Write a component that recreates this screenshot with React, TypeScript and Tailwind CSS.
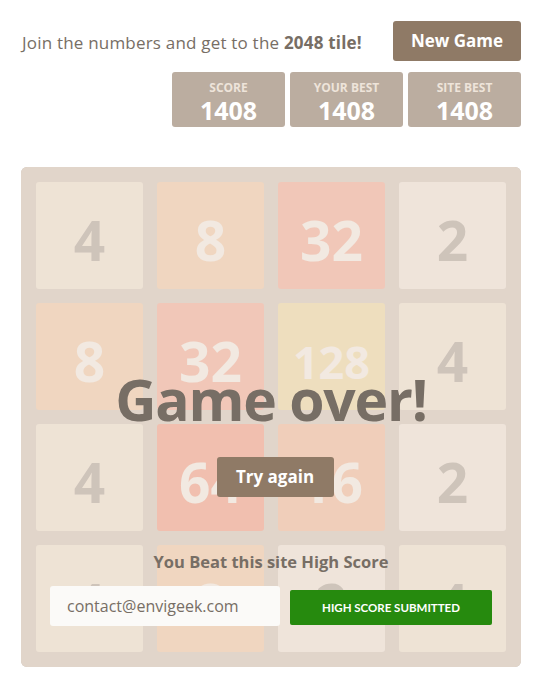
import React from "react";

const grid: number[][] = [
  [4, 8, 32, 2],
  [8, 32, 128, 4],
  [4, 64, 16, 2],
  [4, 8, 2, 4],
];

function tileClass(v: number): string {
  switch (v) {
    case 2:
      return "bg-[#eee4da] text-[#776e65] text-[55px]";
    case 4:
      return "bg-[#ede0c8] text-[#776e65] text-[55px]";
    case 8:
      return "bg-[#f2b179] text-[#f9f6f2] text-[55px]";
    case 16:
      return "bg-[#f59563] text-[#f9f6f2] text-[55px]";
    case 32:
      return "bg-[#f67c5f] text-[#f9f6f2] text-[55px]";
    case 64:
      return "bg-[#f65e3b] text-[#f9f6f2] text-[55px]";
    case 128:
      return "bg-[#edcf72] text-[#f9f6f2] text-[45px]";
    default:
      return "bg-[#eee4da] text-[#776e65] text-[55px]";
  }
}

function ScoreBox({ label, value }: { label: string; value: string }) {
  return (
    <div className="w-[113px] h-[55px] bg-[#bbada0] rounded-[3px] flex flex-col items-center pt-[9px]">
      <div className="text-[12px] leading-[14px] text-[#eee4da] font-bold uppercase">{label}</div>
      <div className="text-[25px] leading-[28px] font-bold text-white mt-[1px]">{value}</div>
    </div>
  );
}

export default function App() {
  return (
    <div
      className="w-[545px] h-[691px] bg-white pt-[21px] pl-[21px]"
      style={{ fontFamily: '"Open Sans", "Noto Sans", sans-serif' }}
    >
      <div className="w-[500px]">
        <div className="flex items-center justify-between h-[40px]">
          <p className="text-[17px] tracking-[0.2px] text-[#776e65] ml-[1px] mt-[3px]">
            Join the numbers and get to the <strong className="font-bold">2048 tile!</strong>
          </p>
          <button className="w-[128px] h-[40px] bg-[#8f7a66] rounded-[3px] text-white font-bold text-[17px]">
            New Game
          </button>
        </div>
        <div className="flex justify-end gap-[5px] mt-[11px]">
          <ScoreBox label="Score" value="1408" />
          <ScoreBox label="Your Best" value="1408" />
          <ScoreBox label="Site Best" value="1408" />
        </div>

        <div className="relative mt-[40px] w-[500px] h-[500px] bg-[#bbada0] rounded-[6px] p-[15px]">
          <div className="grid grid-cols-4 gap-[14px]">
            {grid.flat().map((v, i) => (
              <div
                key={i}
                className={
                  "h-[107px] rounded-[3px] flex items-center justify-center pt-[10px] font-bold " +
                  tileClass(v)
                }
              >
                {v}
              </div>
            ))}
          </div>

          <div className="absolute inset-0 rounded-[6px] bg-[rgba(238,228,218,0.73)] flex flex-col items-center pt-[200px]">
            <div className="text-[57px] leading-[64px] tracking-[-1.2px] font-bold text-[#776e65]">
              Game over!
            </div>
            <button className="mt-[26px] ml-[8px] w-[117px] h-[40px] bg-[#8f7a66] rounded-[3px] text-white font-bold text-[17px]">
              Try again
            </button>
            <div className="mt-[53px] text-[16.5px] leading-[24px] font-bold text-[#776e65]">
              You Beat this site High Score
            </div>
            <div className="mt-[12px] flex items-center gap-[10px]">
              <div className="w-[230px] h-[40px] bg-[#fbfaf8] rounded-[3px] flex items-center pl-[17px] text-[16px] text-[#776e65]">
                contact@envigeek.com
              </div>
              <button
                className="w-[202px] h-[35px] mt-[3px] bg-[#268a0e] rounded-[2px] text-white font-bold text-[11.5px] uppercase"
                style={{ fontFamily: "Lato, sans-serif" }}
              >
                High Score Submitted
              </button>
            </div>
          </div>
        </div>
      </div>
    </div>
  );
}
